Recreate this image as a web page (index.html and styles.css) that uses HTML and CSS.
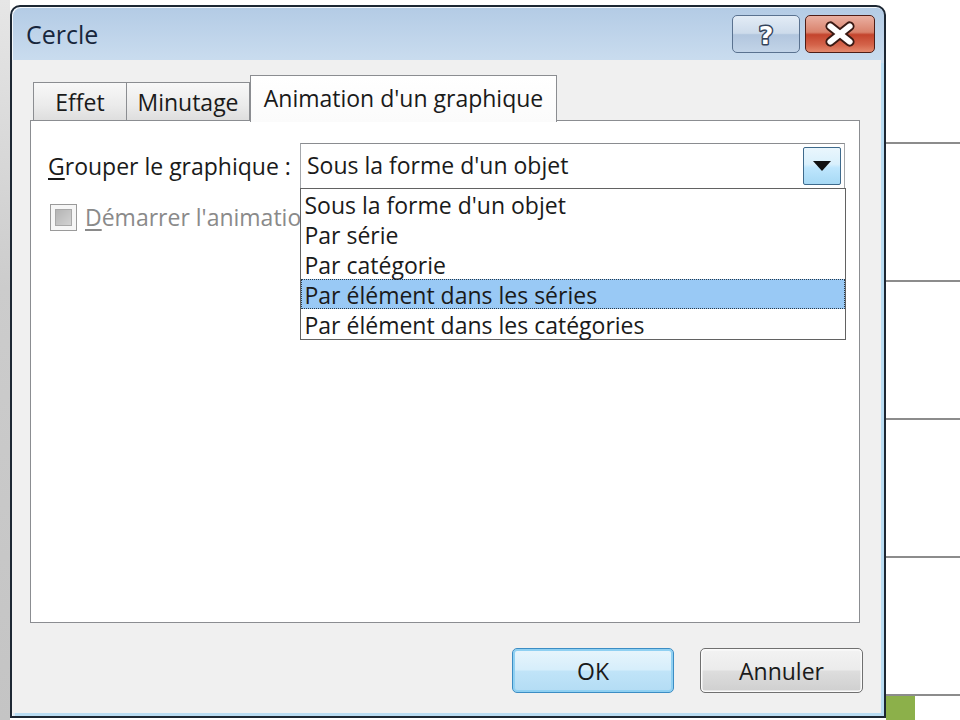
FILE: index.html
```html
<!DOCTYPE html>
<html lang="fr">
<head>
<meta charset="utf-8">
<title>Cercle</title>
<link rel="stylesheet" href="styles.css">
</head>
<body>
<div class="screen">
  <div class="left-strip"></div>
  <div class="dialog">
    <div class="titlebar">
      <span class="title">Cercle</span>
      <div class="caption-btns">
        <div class="cbtn help">
          <svg width="68" height="38" viewBox="0 0 68 38">
            <text x="34" y="29" text-anchor="middle" class="qmark">?</text>
          </svg>
        </div>
        <div class="cbtn close">
          <svg width="70" height="38" viewBox="0 0 70 38">
            <path d="M25 11 L45 27 M45 11 L25 27" stroke="#3a1a14" stroke-width="10" stroke-linecap="round" fill="none"/>
            <path d="M25 11 L45 27 M45 11 L25 27" stroke="#ffffff" stroke-width="6" stroke-linecap="round" fill="none"/>
          </svg>
        </div>
      </div>
    </div>
    <div class="client">
      <div class="tabs">
        <div class="tab tab-effet">Effet</div>
        <div class="tab tab-minutage">Minutage</div>
        <div class="tab active">Animation d'un graphique</div>
      </div>
      <div class="panel">
        <div class="row">
          <label class="label"><span class="u">G</span>rouper le graphique :</label>
          <div class="combo">
            <span class="combo-text">Sous la forme d'un objet</span>
            <div class="combo-btn">
              <svg width="18" height="10" viewBox="0 0 18 10"><path d="M0 0 H18 L9 10 Z" fill="#111"/></svg>
            </div>
            <ul class="droplist">
              <li>Sous la forme d'un objet</li>
              <li>Par série</li>
              <li>Par catégorie</li>
              <li class="sel">Par élément dans les séries</li>
              <li>Par élément dans les catégories</li>
            </ul>
          </div>
        </div>
        <div class="check-row">
          <span class="checkbox"><span class="check-inner"></span></span>
          <span class="check-label"><span class="u">D</span>émarrer l'animation</span>
        </div>
      </div>
      <div class="buttons">
        <div class="btn ok">OK</div>
        <div class="btn">Annuler</div>
      </div>
    </div>
  </div>
  <div class="bg">
    <div class="seg first"></div>
    <div class="seg"></div>
    <div class="seg"></div>
    <div class="seg"></div>
    <div class="seg"></div>
    <div class="bottom-row"><div class="green"></div></div>
  </div>
</div>
</body>
</html>
```

FILE: styles.css
```css
html, body {
  margin: 0;
  padding: 0;
}
body {
  font-family: "Open Sans", "Noto Sans", sans-serif;
  font-size: 23px;
  color: #1a1a1a;
}
.screen {
  display: flex;
  width: 960px;
  height: 720px;
  overflow: hidden;
  background: #ffffff;
}
.left-strip {
  width: 10px;
  flex: none;
  background: linear-gradient(#e6e6e6, #cccccc 40%, #c4c4c4);
}
.dialog {
  width: 876px;
  height: 713px;
  flex: none;
  margin-top: 5px;
  box-sizing: border-box;
  border: 2px solid #1d2733;
  border-radius: 10px 10px 0 0;
  background: linear-gradient(#b3cbe5, #c8dbee 50px, #d6e4f1 100px, #dce8f3);
  display: flex;
  flex-direction: column;
  box-shadow: inset 1px 1px 0 #f4f8fc;
}
.titlebar {
  height: 53px;
  flex: none;
  display: flex;
  align-items: flex-start;
  justify-content: space-between;
  padding: 0 9px 0 14px;
}
.title {
  font-size: 25px;
  color: #17263c;
  margin-top: 10px;
}
.caption-btns {
  display: flex;
  gap: 5px;
  margin-top: 8px;
}
.cbtn {
  height: 38px;
  box-sizing: border-box;
  border-radius: 5px;
  display: flex;
  align-items: center;
  justify-content: center;
  overflow: hidden;
}
.help {
  width: 68px;
  border: 1.5px solid #5a7290;
  background: linear-gradient(#e3ecf6, #cddbeb 48%, #b2c6de 52%, #c2d4e8);
}
.qmark {
  font-family: "DejaVu Sans", sans-serif;
  font-weight: bold;
  font-size: 26px;
  fill: #ffffff;
  stroke: #34445c;
  stroke-width: 3px;
  paint-order: stroke;
  stroke-linejoin: round;
}
.close {
  width: 70px;
  border: 1.5px solid #4e1d16;
  background: linear-gradient(#eab0a2, #d9826c 45%, #c4442d 52%, #d4634a 80%, #e48a6e);
}
.client {
  flex: 1;
  margin: 0 3px 3px 0;
  background: #f0f0f0;
  padding: 15px 21px 0 18px;
  display: flex;
  flex-direction: column;
  box-shadow: 3px 3px 0 #b9dcf2;
}
.tabs {
  display: flex;
  align-items: flex-end;
  height: 47px;
  margin: 0 0 -2px 3px;
  position: relative;
  z-index: 2;
}
.tab {
  box-sizing: border-box;
  height: 38px;
  margin-bottom: 2px;
  border: 1.5px solid #8b8d91;
  border-bottom: none;
  background: linear-gradient(#f8f8f8, #ebebeb 60%, #dedede);
  display: flex;
  align-items: center;
  justify-content: center;
  padding-top: 1px;
}
.tab-effet {
  width: 94px;
}
.tab-minutage {
  width: 123px;
  border-left: none;
}
.tab.active {
  width: 307px;
  height: 47px;
  margin-bottom: 0;
  background: linear-gradient(#ffffff, #fbfbfb);
  padding-top: 0;
  padding-bottom: 3px;
}
.panel {
  flex: 1;
  background: #ffffff;
  border: 1.5px solid #8b8d91;
  padding: 22px 14px 0 17px;
  position: relative;
}
.row {
  display: flex;
  align-items: center;
}
.label {
  width: 252px;
  flex: none;
}
.u {
  text-decoration: underline;
  text-underline-offset: 3px;
}
.combo {
  flex: 1;
  height: 46px;
  box-sizing: border-box;
  border: 1.5px solid #a4a7ab;
  border-top-color: #8a8c90;
  background: #ffffff;
  display: flex;
  align-items: center;
  justify-content: space-between;
  padding: 0 3px 0 6px;
  position: relative;
}
.combo-text {
  margin-top: -2px;
}
.combo-btn {
  width: 38px;
  height: 38px;
  box-sizing: border-box;
  border: 1.5px solid #3e6a8c;
  border-radius: 2px;
  background: linear-gradient(#eaf6fd, #d9f0fc 45%, #bee6fd 55%, #a7d9f5);
  display: flex;
  align-items: center;
  justify-content: center;
}
.droplist {
  position: absolute;
  top: 100%;
  left: -1.5px;
  right: -1.5px;
  margin: 0;
  padding: 0;
  list-style: none;
  background: #ffffff;
  border: 1.5px solid #626262;
  z-index: 5;
}
.droplist li {
  height: 30px;
  line-height: 28px;
  padding: 2px 0 0 4px;
  box-sizing: border-box;
  white-space: nowrap;
}
.droplist li.sel {
  background: #99c9f5;
  outline: 1.5px dotted #2a3a4a;
  outline-offset: -1.5px;
}
.check-row {
  display: flex;
  align-items: center;
  gap: 8px;
  margin-top: 12px;
  padding-left: 2px;
  white-space: nowrap;
  color: #8a8a8a;
}
.checkbox {
  width: 27px;
  height: 27px;
  box-sizing: border-box;
  border: 1.5px solid #9a9a9a;
  background: #f6f6f6;
  display: flex;
  align-items: center;
  justify-content: center;
  flex: none;
}
.check-inner {
  width: 17px;
  height: 17px;
  box-sizing: border-box;
  border: 1.5px solid #a8a8a8;
  background: linear-gradient(135deg, #b4b4b4, #d2d2d2);
}
.buttons {
  display: flex;
  justify-content: flex-end;
  gap: 26px;
  padding: 25px 0 20px;
  margin-right: -3px;
}
.btn {
  width: 163px;
  height: 45px;
  box-sizing: border-box;
  border: 1.5px solid #707070;
  border-radius: 5px;
  background: linear-gradient(#f3f3f3, #ebebeb 48%, #dddddd 52%, #cfcfcf);
  display: flex;
  align-items: center;
  justify-content: center;
  box-shadow: inset 0 0 0 1.5px #fbfbfb;
}
.btn.ok {
  width: 162px;
  border-color: #3c8dc4;
  background: linear-gradient(#e8f5fc, #d6eefb 48%, #c0e4f8 52%, #b3dcf4);
  box-shadow: inset 0 0 0 2px #8fd0f2;
}
.bg {
  flex: 1;
  display: flex;
  flex-direction: column;
}
.seg {
  height: 136px;
  flex: none;
  border-bottom: 2px solid #8c8c8c;
}
.seg.first {
  height: 142px;
}
.bottom-row {
  flex: 1;
  display: flex;
}
.green {
  width: 29px;
  background: #8cb04a;
}
```
